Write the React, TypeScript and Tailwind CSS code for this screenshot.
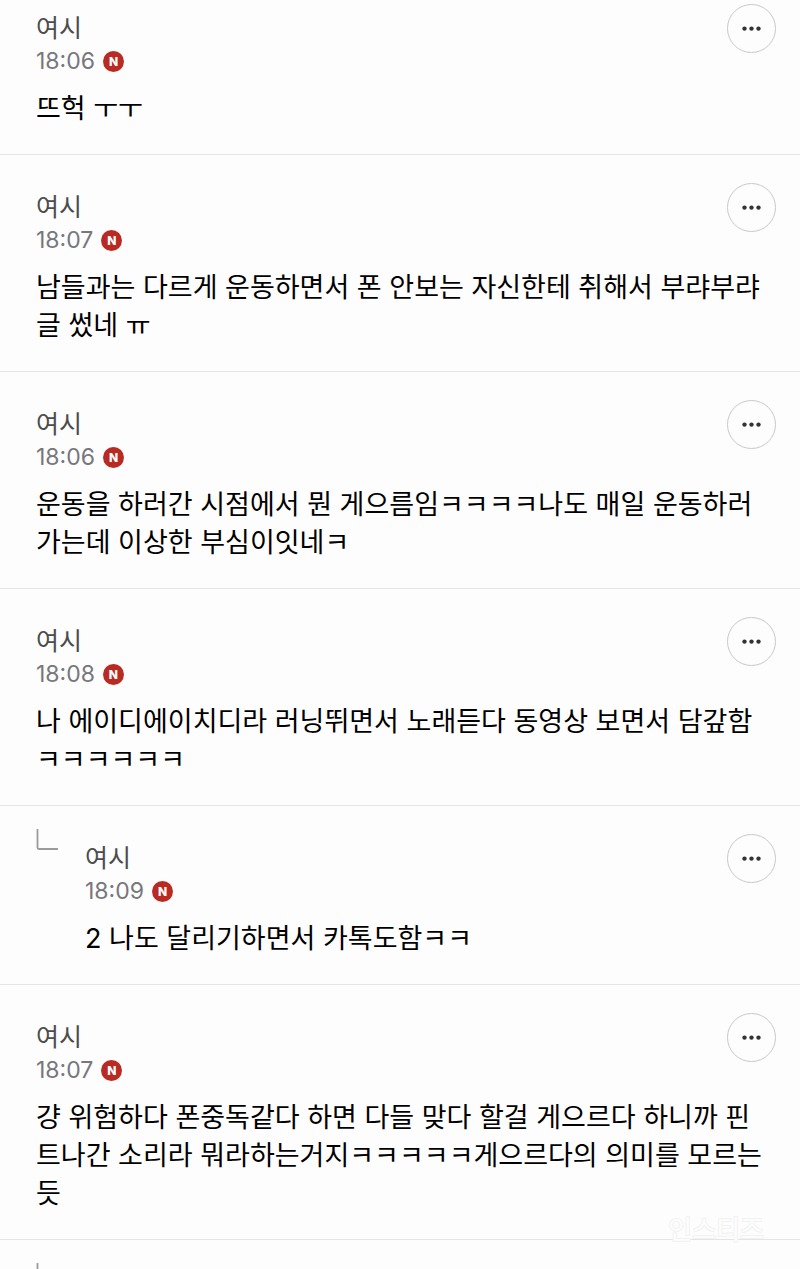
import React from "react";

type Comment = {
  author: string;
  time: string;
  text: string;
  reply?: boolean;
};

const comments: Comment[] = [
  { author: "여시", time: "18:06", text: "뜨헉 ㅜㅜ" },
  {
    author: "여시",
    time: "18:07",
    text: "남들과는 다르게 운동하면서 폰 안보는 자신한테 취해서 부랴부랴 글 썼네 ㅠ",
  },
  {
    author: "여시",
    time: "18:06",
    text: "운동을 하러간 시점에서 뭔 게으름임ㅋㅋㅋㅋ나도 매일 운동하러 가는데 이상한 부심이잇네ㅋ",
  },
  {
    author: "여시",
    time: "18:08",
    text: "나 에이디에이치디라 러닝뛰면서 노래듣다 동영상 보면서 담갚함 ㅋㅋㅋㅋㅋㅋ",
  },
  {
    author: "여시",
    time: "18:09",
    text: "2 나도 달리기하면서 카톡도함ㅋㅋ",
    reply: true,
  },
  {
    author: "여시",
    time: "18:07",
    text: "걍 위험하다 폰중독같다 하면 다들 맞다 할걸 게으르다 하니까 핀트나간 소리라 뭐라하는거지ㅋㅋㅋㅋㅋ게으르다의 의미를 모르는 듯",
  },
];

const ReplyCorner = () => (
  <svg
    width="22"
    height="22"
    viewBox="0 0 22 22"
    fill="none"
    stroke="#9b9b9b"
    strokeWidth="1.8"
    className="shrink-0"
    aria-hidden="true"
  >
    <path d="M1.5 0V18.5Q1.5 20 3 20H22" />
  </svg>
);

const NewBadge = () => (
  <span className="flex size-[21px] items-center justify-center rounded-full bg-[#b92b22] text-[12px] leading-none font-extrabold text-white">
    N
  </span>
);

const MoreButton = () => (
  <button
    type="button"
    aria-label="더보기"
    className="flex size-[49px] shrink-0 cursor-pointer items-center justify-center rounded-full border border-[#c9c9c9]"
  >
    <svg width="20" height="6" viewBox="0 0 20 6" fill="#333333" aria-hidden="true">
      <circle cx="2.5" cy="2.6" r="2.2" />
      <circle cx="9.5" cy="2.6" r="2.2" />
      <circle cx="16.5" cy="2.6" r="2.2" />
    </svg>
  </button>
);

const CommentItem = ({ comment, first }: { comment: Comment; first: boolean }) => (
  <article className="flex border-b border-[#e4e4e4] pl-9">
    {comment.reply && (
      <div className="w-[49px] shrink-0 pt-[23px]">
        <ReplyCorner />
      </div>
    )}
    <div className={first ? "min-w-0 flex-1 pt-1 pb-[26px]" : "min-w-0 flex-1 pt-7 pb-[26px]"}>
      <header className="flex items-start justify-between pr-6">
        <div className="pt-2">
          <p className="text-[25px] leading-[32px] text-[#4c4c4c]">{comment.author}</p>
          <div className="flex h-[35px] items-center gap-2">
            <time className="text-[23px] leading-none text-[#77777c]">{comment.time}</time>
            <NewBadge />
          </div>
        </div>
        <MoreButton />
      </header>
      <p className="mt-[11px] pr-9 text-[27px] leading-[38px] text-black">{comment.text}</p>
    </div>
  </article>
);

const App = () => {
  return (
    <main className="relative h-screen overflow-hidden bg-[#fdfdfd] font-['Inter','Noto_Sans_CJK_KR',sans-serif]">
      {comments.map((comment, idx) => (
        <CommentItem key={idx} comment={comment} first={idx === 0} />
      ))}
      <div className="pt-[23px] pl-9">
        <ReplyCorner />
      </div>

      {/* Watermark */}
      <span className="absolute right-9 bottom-5 text-[26px] leading-[38px] text-[#fdfdfd] [paint-order:stroke] [-webkit-text-stroke:2px_#f2f2f2]">
        인스티즈
      </span>
    </main>
  );
};

export default App;
